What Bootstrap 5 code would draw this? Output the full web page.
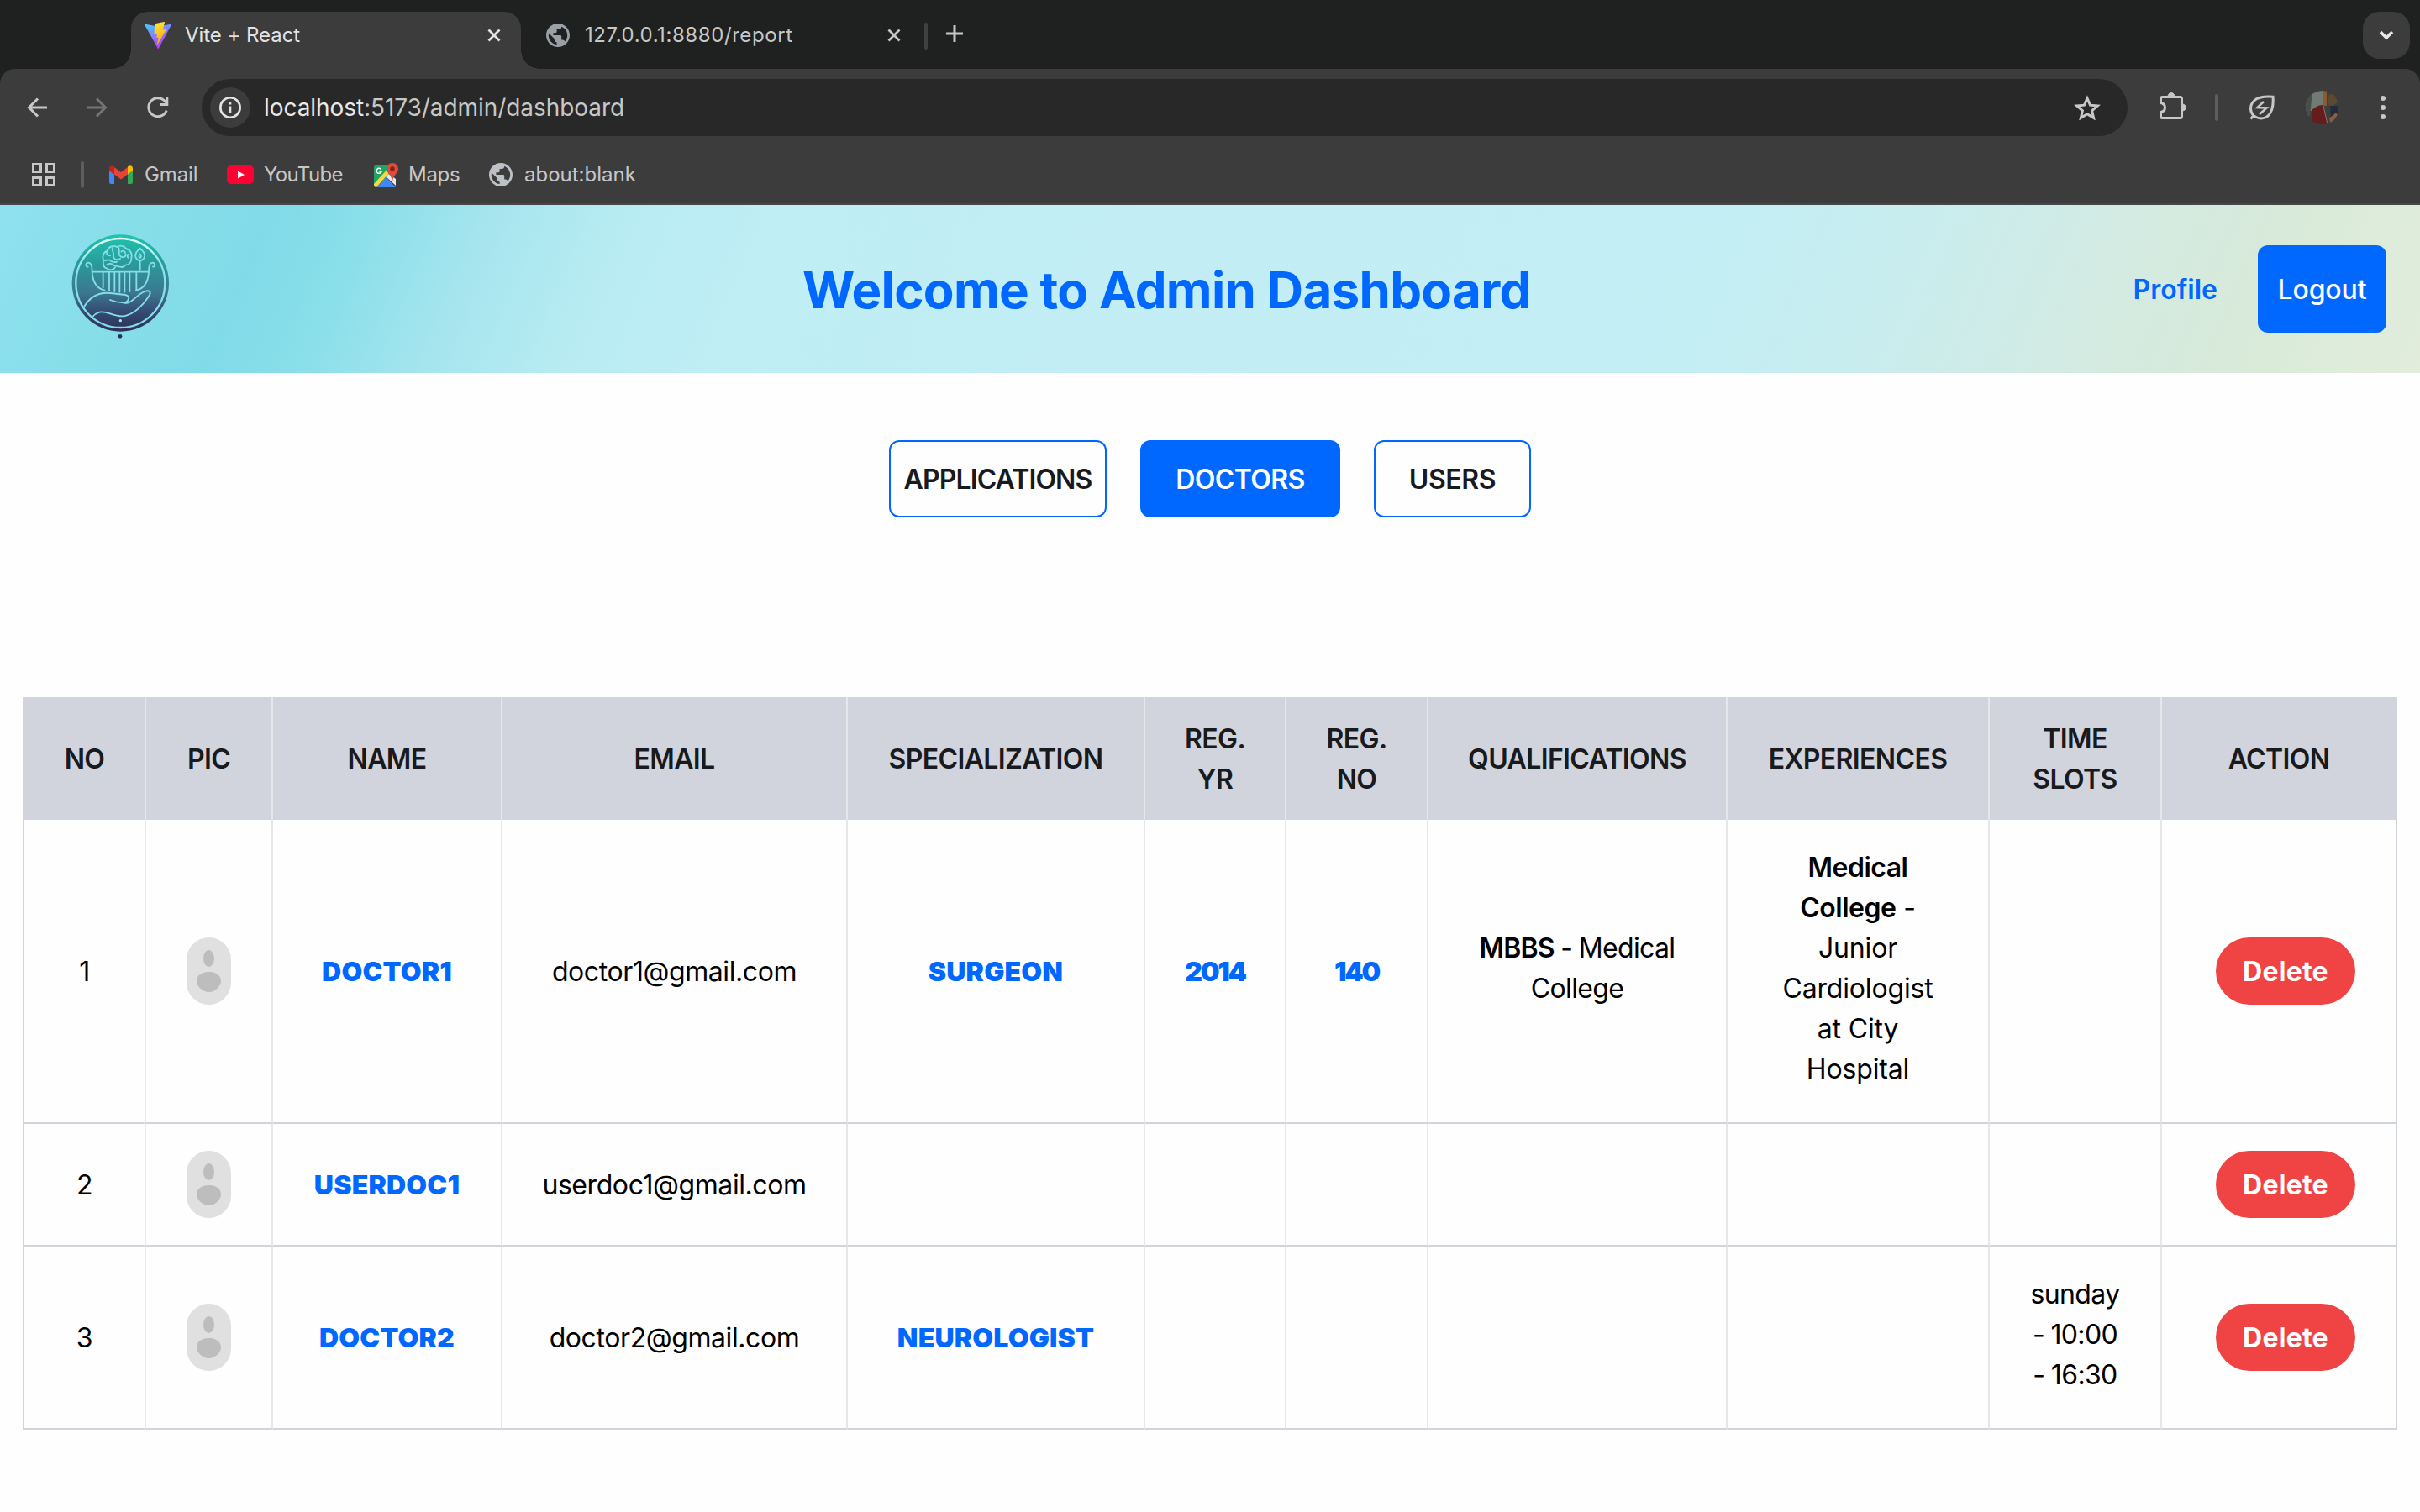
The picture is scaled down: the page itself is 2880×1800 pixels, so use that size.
<!DOCTYPE html>
<html lang="en">
<head>
<meta charset="utf-8">
<title>Vite + React</title>
<link href="https://cdn.jsdelivr.net/npm/bootstrap@5.3.0/dist/css/bootstrap.min.css" rel="stylesheet">
<style>
body{font-family:Inter,"Liberation Sans",sans-serif;font-size:32px;line-height:48px;color:#000;background:#fefefe;width:2880px;height:1800px;overflow:hidden}
svg{display:block;flex:none}
/* browser frame */
.chrome{background:#3c3c3c;color:#c7c7c7;height:244px;border-bottom:2px solid #47474a;font-size:24px;font-weight:400;line-height:32px;white-space:nowrap}
.strip{height:82px;background:#1f2120;padding:0 12px 0 156px}
.tab-on{position:relative;width:464px;height:68px;margin-top:14px;padding:0 24px 12px 16px;background:#3c3c3c;border-radius:20px 20px 0 0;color:#e3e3e3;letter-spacing:-.002em}
.tab-on::before,.tab-on::after{content:"";position:absolute;bottom:0;width:22px;height:22px}
.tab-on::before{left:-22px;background:radial-gradient(circle at 0 0,transparent 21.5px,#3c3c3c 22px)}
.tab-on::after{right:-22px;background:radial-gradient(circle at 100% 0,transparent 21.5px,#3c3c3c 22px)}
.tab-off{width:422px;margin-left:30px;padding-top:2px;letter-spacing:.024em}
.vline{width:4px;height:32px;border-radius:2px;background:#5e5e5e;flex:none}
.more{width:56px;height:56px;border-radius:20px;background:#3c3c3c}
.tools{height:92px;background:#3c3c3c;padding-left:32px;padding-right:41px}
.tool-bg{background:#1f2120}
.tools{border-radius:18px 18px 0 0}
.omni{width:2292px;height:68px;border-radius:34px;background:#282828;padding:0 32px 0 10px;margin-left:40px;font-size:28px;font-weight:400;letter-spacing:-.0024em}
.omni b{font-weight:400;color:#e8e8e8}
.info{width:48px;height:48px;border-radius:50%;background:#3c3c3c;margin-right:16px}
.marks{height:68px;padding-left:38px}
/* page header */
.topbar{height:200px;padding:0 40px 0 77px;background:linear-gradient(113deg,#8fe1ef 0,#86dee9 6%,#80dbe8 11%,#8adfea 15%,#a6e5ee 20%,#b7ebf2 25%,#bfeef5 31%,#c2edf4 45%,#c3eef4 70%,#c8edef 77%,#d1ebe5 84%,#d8ead9 92%,#e2eddc 100%)}
.logo{margin:0 31px 4px 0}
.topbar h1{font-size:60px;font-weight:700;line-height:72px;letter-spacing:-.0112em;color:#0067ff;margin:0 0 -1px}
.profile{color:#0067ff;font-weight:600;text-decoration:none;margin-right:48px;padding-top:2px}
.logout{width:153px;height:104px;border-radius:12px;background:#0067ff;color:#fff;font-size:32px;font-weight:500;padding:2px 0 0;letter-spacing:-.004em}
/* section switch */
.switch{gap:40px;padding-top:80px;margin-bottom:214px}
.switch .btn{height:92px;padding:2px 0 0;border:2px solid #0067ff;border-radius:12px;font-size:32px;font-weight:600;color:#181a1e;letter-spacing:-.012em}
.switch .on{background:#0067ff;color:#fff}
/* doctors grid */
.doctors{width:2826px;margin:0 0 0 27px;table-layout:fixed;border-collapse:separate;border-spacing:0;border:solid #d1d5db;border-width:0 2px;text-align:center;vertical-align:middle;letter-spacing:-.013em}
.doctors th,.doctors td{padding:2px 0 0;vertical-align:middle;border-right:2px solid #e5e7eb}
.doctors th:last-child,.doctors td:last-child{border-right:0}
.doctors td{border-bottom:2px solid #d1d5db}
.doctors td:nth-child(2),.doctors td:last-child{padding:0}
.doctors th{height:146px;background:#d1d4dc;color:#181a1e;font-weight:600;letter-spacing:-.0195em}
.doctors .blue{color:#0067ff;font-weight:900;letter-spacing:.006em}
.doctors .digits{letter-spacing:-.07em}
.doctors .lines{padding:0 0 6px;letter-spacing:-.005em}
.doctors .tight{letter-spacing:-.02em;word-spacing:-.03em}
.doctors b{font-weight:600;letter-spacing:-.0156em}
.doctors .tight b{letter-spacing:-.025em}
.pic{width:53px;height:80px;margin:0 auto}
.del{width:166px;height:80px;margin-left:16px;padding:2px 0 0;border-radius:40px;background:#f04444;color:#fff;font-size:32px;font-weight:700;letter-spacing:.008em}
</style>
<script src="https://cdn.jsdelivr.net/npm/bootstrap@5.3.0/dist/js/bootstrap.bundle.min.js"></script>
</head>
<body>
<svg width="0" height="0" class="position-absolute">
  <defs>
    <symbol id="globe" viewBox="2 2 20 20"><path d="M12 2C6.48 2 2 6.48 2 12s4.480 10 10 10 10-4.480 10-10S17.520 2 12 2zm-1 17.930c-3.950-.49-7-3.850-7-7.930 0-.62.08-1.210.21-1.790L9 15v1c0 1.100.9 2 2 2v1.930zm6.900-2.540c-.26-.81-1-1.390-1.900-1.390h-1v-3c0-.55-.45-1-1-1H8v-2h2c.55 0 1-.45 1-1V7h2c1.100 0 2-.9 2-2v-.41c2.930 1.190 5 4.060 5 7.410 0 2.080-.8 3.970-2.100 5.390z"/></symbol>
    <symbol id="cross" viewBox="0 0 16 16"><path d="M1.500 1.500l13 13M14.500 1.500l-13 13" fill="none" stroke="currentColor" stroke-width="2.800"/></symbol>
    <symbol id="person" viewBox="0 0 53 80"><rect width="53" height="80" rx="26.500" fill="#e0e0e0"/><ellipse cx="26.500" cy="25" rx="6.500" ry="10" fill="#bdbdbd"/><path d="M12 52c0-7 6-11 14.500-11S41 45 41 52c0 6-7 13-14.500 13S12 58 12 52z" fill="#bdbdbd"/></symbol>
  </defs>
</svg>

<div class="chrome">
  <div class="strip d-flex">
    <div class="tab-on d-flex align-items-center">
      <svg width="32" height="32" viewBox="0 0 32 32" class="me-3">
        <defs><linearGradient id="va" x1="0" y1="0" x2=".6" y2="1"><stop offset="0" stop-color="#41d1ff"/><stop offset="1" stop-color="#bd34fe"/></linearGradient><linearGradient id="vb" x1=".4" y1="0" x2=".6" y2="1"><stop offset="0" stop-color="#ffea83"/><stop offset=".1" stop-color="#ffdd35"/><stop offset="1" stop-color="#ffa800"/></linearGradient></defs>
        <path d="M31.900 3.600L16.900 31.400q-.6 1-1.200 0L.1 3.600q-.4-1 .8-.9l15.200 2.700 15-2.700q1.100-.1.800.9z" fill="url(#va)"/>
        <path d="M23.300 0L12.200 2.200l-.7 11.900q0 .5.500.4l3.200-.8-1 4.800q0 .6.500.4l2-.5-1.600 7.800q.1 1 .8.100L25.600 9.500q.3-.6-.4-.6l-3.400.7L24 .5q.1-.6-.7-.5z" fill="url(#vb)"/>
      </svg>
      <span>Vite + React</span>
      <svg width="16" height="16" class="ms-auto"><use href="#cross"/></svg>
    </div>
    <div class="tab-off d-flex align-items-center">
      <svg width="28" height="28" fill="#9aa0a6" style="margin-right:18px"><use href="#globe"/></svg>
      <span>127.0.0.1:8880/report</span>
      <svg width="16" height="16" class="ms-auto"><use href="#cross"/></svg>
    </div>
    <div class="d-flex align-items-center ms-4 ps-1 mt-1">
      <span class="vline" style="background:#3f4140"></span>
      <svg width="20" height="20" viewBox="0 0 20 20" style="margin:0 0 6px 22px"><path d="M10 0v20M0 10h20" stroke="#c7c7c7" stroke-width="3"/></svg>
    </div>
    <div class="more ms-auto d-flex align-items-center justify-content-center" style="margin-top:14px">
      <svg width="18" height="12" viewBox="0 0 18 12"><path d="M2 2l7 7 7-7" fill="none" stroke="#e8e8e8" stroke-width="3.600"/></svg>
    </div>
  </div>

  <div class="tool-bg"><div class="tools d-flex align-items-center">
    <svg width="24" height="24" viewBox="0 0 24 24"><path d="M13 1.500L2.500 12 13 22.500M2.500 12H24" fill="none" stroke="#c7c7c7" stroke-width="3"/></svg>
    <svg width="24" height="24" viewBox="0 0 24 24" class="ms-5"><path d="M11 1.500L21.500 12 11 22.500M21.500 12H0" fill="none" stroke="#757575" stroke-width="3"/></svg>
    <svg width="26" height="26" viewBox="0 0 26 26" style="margin:0 -1px 0 47px"><path d="M23.200 16.500A11 11 0 1 1 21 5.300l2.500 3M23.800 1v8.500h-8.500" fill="none" stroke="#c7c7c7" stroke-width="3"/></svg>
    <div class="omni d-flex align-items-center">
      <span class="info d-flex align-items-center justify-content-center"><svg width="26" height="26" viewBox="0 0 26 26"><circle cx="13" cy="13" r="11.700" fill="none" stroke="#e3e3e3" stroke-width="2.600"/><path d="M13 11.500v8M13 6.500v3" stroke="#e3e3e3" stroke-width="2.600"/></svg></span>
      <span><b>localhost</b>:5173/admin/dashboard</span>
      <svg width="32" height="30" viewBox="0 0 32 30" class="ms-auto"><path d="M16 4l3.500 8.200 8.800.8-6.700 5.800 2 8.600L16 22.800l-7.600 4.600 2-8.600L3.700 13l8.800-.8z" fill="none" stroke="#c7c7c7" stroke-width="3"/></svg>
    </div>
    <svg width="32" height="32" viewBox="0 0 32 32" style="margin:0 34px 4px 38px"><path d="M3.500 5.500h21q2 0 2 2v21q0 2-2 2h-21q-2 0-2-2v-5q5-1 5-5.500t-5-5.500v-5q0-2 2-2z" fill="none" stroke="#c7c7c7" stroke-width="3"/><path d="M10 5a4 4.500 0 0 1 8 0zM27 14a4.500 4 0 0 1 0 8z" fill="#c7c7c7" stroke="#c7c7c7"/></svg>
    <span class="vline"></span>
    <svg width="30" height="30" viewBox="0 0 30 30" style="margin-left:37px"><path d="M28 2.200C17 1.500 10 2.500 5.500 7 0 12.500.5 20 5 24.500c5 4.500 13 4.500 17.500 0C27 20 28.800 12 28 2.200zM6 23.500L1.500 28.500" fill="none" stroke="#c7c7c7" stroke-width="3"/><path d="M17 8l-7.500 7 11 .5L12 23" fill="none" stroke="#c7c7c7" stroke-width="2.600"/></svg>
    <svg width="40" height="40" viewBox="0 0 40 40" style="margin:0 49px 0 37px">
      <defs><clipPath id="av"><circle cx="20" cy="20" r="20"/></clipPath></defs>
      <g clip-path="url(#av)"><path fill="#3a413c" d="M0 0h40v40H0z"/><path fill="#727a74" d="M0 0h20v24H0z"/><path fill="#46504b" d="M0 0h8l-3 30H0z"/><path fill="#8a5a32" d="M20 0h5v18h-5z"/><path fill="#5c4934" d="M26 8q3-6 9-3l3 9-8 5-4-3z"/><path fill="#651d1c" d="M7 40V23q8-7 14-6l6 23z"/><path d="M21 18l5 22" stroke="#877" stroke-width="1"/><path fill="#232b3c" d="M29 18h9v13h-8z"/><path fill="#8a5f40" d="M28 33l8-7 2 3-8 11z"/></g>
    </svg>
    <svg width="6" height="28" viewBox="0 0 6 28" fill="#c7c7c7"><circle cx="3" cy="3" r="3"/><circle cx="3" cy="14" r="3"/><circle cx="3" cy="25" r="3"/></svg>
  </div></div>

  <div class="marks d-flex align-items-center">
    <svg width="28" height="28" viewBox="0 0 28 28" fill="none" stroke="#c7c7c7" stroke-width="3"><path d="M1.500 1.500h9v9h-9zM17.500 1.500h9v9h-9zM1.500 17.500h9v9h-9zM17.500 17.500h9v9h-9z"/></svg>
    <span class="vline" style="margin:0 30px"></span>
    <svg width="28" height="22" viewBox="0 0 28 22" style="margin-right:14px"><path fill="#4285f4" d="M0 6l6 4v12H2q-2 0-2-2z"/><path fill="#34a853" d="M22 10l6-4v14q0 2-2 2h-4z"/><path fill="#ea4335" d="M6 2l8 6 8-6v8.500l-8 6-8-6z"/><path fill="#c5221f" d="M0 3.500Q.3.300 3.300.300 4.700.3 6 1.600v8.900L0 6z"/><path fill="#fbbc04" d="M28 3.500Q27.700.300 24.700.300 23.300.3 22 1.600v8.900L28 6z"/></svg>
    <span style="letter-spacing:-.004em;width:98px">Gmail</span>
    <svg width="32" height="22" viewBox="0 0 32 22" style="margin-right:12px"><rect width="32" height="22" rx="5" fill="#ff0033"/><path d="M13 6.500v9l8-4.500z" fill="#fff"/></svg>
    <span style="letter-spacing:-.027em;width:131px">YouTube</span>
    <svg width="29" height="29" viewBox="0 0 29 29" style="margin:0 12px 0 0"><path fill="#1fa463" d="M2 3h18l4 10L2 27q-2 0-2-2V5q0-2 2-2z"/><path fill="#e8e8e8" d="M14 16l4-3 8 6v8z"/><path fill="#4285f4" d="M3 29l11.500-12L26 29z"/><path fill="#fdd73b" d="M0 25L15 8.500l2.500 4L3 29q-3 0-3-3z"/><path fill="#e24a3b" d="M22 0c-4 0-7 3-7 7 0 5 6 7 7 15 1-8 7-10 7-15 0-4-3-7-7-7z"/><circle cx="22" cy="7" r="2.700" fill="#7c231b"/><path d="M8.500 7.500A3 3 0 1 0 9 10.200H6.500" fill="none" stroke="#fff" stroke-width="1.500"/></svg>
    <span style="letter-spacing:-.012em;width:96px">Maps</span>
    <svg width="28" height="28" fill="#bdc1c6" style="margin-right:14px"><use href="#globe"/></svg>
    <span>about:blank</span>
  </div>
</div>

<header class="topbar d-flex align-items-center justify-content-between">
  <svg class="logo" width="130" height="130" viewBox="50 50 390 390">
    <defs><linearGradient id="lg" x1="0" y1="0" x2="0" y2="1"><stop offset="0" stop-color="#1ec5ae"/><stop offset=".3" stop-color="#2a9a9b"/><stop offset=".6" stop-color="#3c7790"/><stop offset=".8" stop-color="#354a72"/><stop offset="1" stop-color="#2c2f55"/></linearGradient>
    <linearGradient id="lr" x1="0" y1="0" x2="0" y2="1"><stop offset="0" stop-color="#e8fff8"/><stop offset=".3" stop-color="#8fe3ea"/><stop offset="1" stop-color="#7fdbe8"/></linearGradient></defs>
    <circle cx="249" cy="230" r="173" fill="url(#lg)"/>
    <circle cx="249" cy="230" r="159" fill="none" stroke="url(#lr)" stroke-width="7"/>
    <g fill="none" stroke="#86dde8" stroke-width="5.500" stroke-linecap="round" stroke-linejoin="round">
      <path d="M133 172c-10-2-9-14 2-15 10 0 13 10 13 33h202c0-23 3-33 13-33 11 1 12 13 2 15M148 190c2 38 18 60 45 66M350 190c-2 38-18 60-45 66"/>
      <path d="M187 192v54M209 192v65M228 192v68M246 192v70M264 192v70M282 192v68M306 192v62"/>
      <path d="M188 150c-6-18 2-32 14-36 5-16 24-20 34-13 12-8 28-3 33 6 16 4 24 20 19 36 0 14-10 22-22 23-5 10-22 8-34 1-2 16-22 20-32 10-12-2-14-16-12-27zM202 114c-8 10 2 18 10 18M188 150c12 0 20-6 22-2s18 10 26 6M222 101c-6 14 4 16 2 30s16 20 24 12M240 101c10 10 0 20 6 30s22 8 22-4M252 118c6-6 14-2 14 4M200 165c8-8 20-4 26 2M276 128c-4 4-2 10 2 12"/>
      <path d="M319 106c-22 18-22 36 0 46 22-10 22-28 0-46zM319 152v32M319 126c-6 6-5 12 0 14 5-2 6-8 0-14z"/>
      <path d="M118 316c24-40 60-54 96-50 22 2 38 4 52 6 20 2 14 26-6 28-20 0-34-4-48-10M260 300c26 10 46-30 76-40 16-6 24 2 16 14-22 34-54 66-90 74-36 4-60-20-88-14-12 4-18 8-24 16"/>
    </g>
    <circle cx="249" cy="364" r="5" fill="#a6e9f0"/><circle cx="248" cy="420" r="7" fill="#26305a"/>
  </svg>
  <h1>Welcome to Admin Dashboard</h1>
  <nav class="d-flex align-items-center">
    <a class="profile" href="#">Profile</a>
    <button class="btn logout">Logout</button>
  </nav>
</header>

<main>
  <div class="switch d-flex justify-content-center">
    <button class="btn" style="width:259px;letter-spacing:-.0273em">APPLICATIONS</button>
    <button class="btn on" style="width:238px;letter-spacing:-.018em">DOCTORS</button>
    <button class="btn" style="width:187px">USERS</button>
  </div>

  <table class="doctors">
    <colgroup><col style="width:145px"><col style="width:151px"><col style="width:273px"><col style="width:411px"><col style="width:354px"><col style="width:168px"><col style="width:169px"><col style="width:356px"><col style="width:312px"><col style="width:205px"><col style="width:278px"></colgroup>
    <thead>
      <tr><th>NO</th><th>PIC</th><th>NAME</th><th>EMAIL</th><th>SPECIALIZATION</th><th>REG.<br>YR</th><th>REG.<br>NO</th><th>QUALIFICATIONS</th><th>EXPERIENCES</th><th>TIME<br>SLOTS</th><th>ACTION</th></tr>
    </thead>
    <tbody>
      <tr style="height:362px"><td>1</td><td><svg class="pic"><use href="#person"/></svg></td><td class="blue">DOCTOR1</td><td>doctor1@gmail.com</td><td class="blue">SURGEON</td><td class="blue digits">2014</td><td class="blue digits">140</td><td class="lines tight"><b>MBBS</b> - Medical<br>College</td><td class="lines"><b>Medical<br>College</b> -<br>Junior<br>Cardiologist<br>at City<br>Hospital</td><td></td><td><button class="btn del">Delete</button></td></tr>
      <tr style="height:146px"><td>2</td><td><svg class="pic"><use href="#person"/></svg></td><td class="blue">USERDOC1</td><td>userdoc1@gmail.com</td><td></td><td></td><td></td><td></td><td></td><td></td><td><button class="btn del">Delete</button></td></tr>
      <tr style="height:218px"><td>3</td><td><svg class="pic"><use href="#person"/></svg></td><td class="blue">DOCTOR2</td><td>doctor2@gmail.com</td><td class="blue">NEUROLOGIST</td><td></td><td></td><td></td><td></td><td class="lines tight">sunday<br>- 10:00<br>- 16:30</td><td><button class="btn del">Delete</button></td></tr>
    </tbody>
  </table>
</main>
</body>
</html>
